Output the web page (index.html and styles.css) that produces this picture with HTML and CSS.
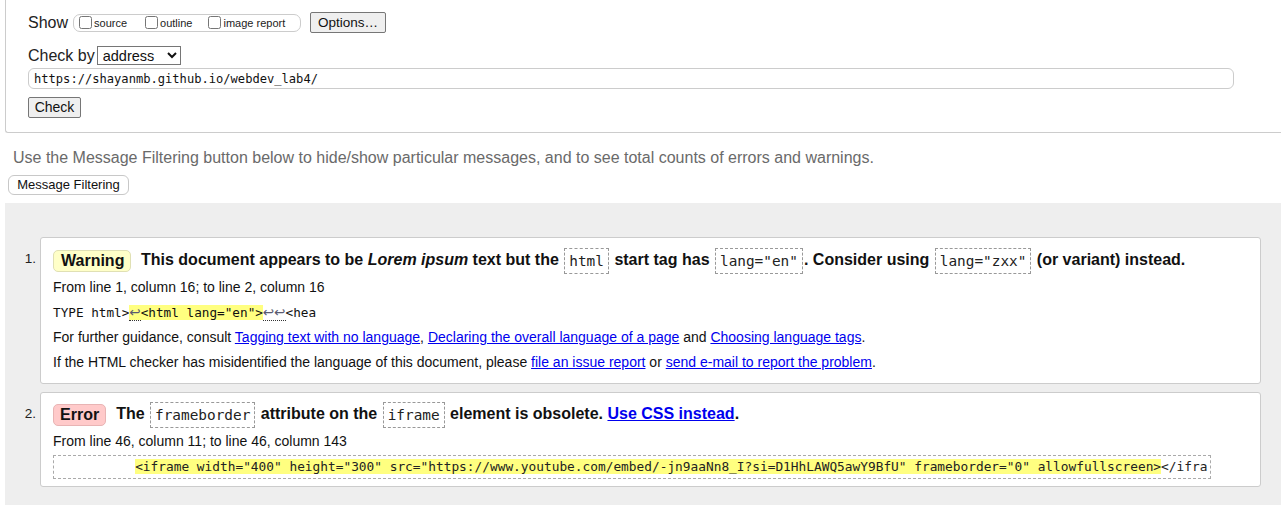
FILE: index.html
```html
<!DOCTYPE html>
<html lang="en">
<head>
<meta charset="utf-8">
<title>Nu Html Checker</title>
<link rel="stylesheet" href="styles.css">
</head>
<body>
<form class="top">
  <div class="row row-show">
    <span class="lbl">Show</span>
    <fieldset class="opts">
      <label class="opt opt-source"><input type="checkbox">source</label>
      <label class="opt opt-outline"><input type="checkbox">outline</label>
      <label class="opt"><input type="checkbox">image report</label>
    </fieldset>
    <button type="button" class="btn btn-options">Options…</button>
  </div>
  <div class="row row-by">
    <span class="lbl">Check by</span>
    <select class="sel"><option>address</option></select>
  </div>
  <input class="url" type="text" value="https://shayanmb.github.io/webdev_lab4/">
  <div class="row-check"><button type="button" class="btn btn-check">Check</button></div>
</form>
<p class="hint">Use the Message Filtering button below to hide/show particular messages, and to see total counts of errors and warnings.</p>
<button type="button" class="filter">Message Filtering</button>
<div class="results">
  <ol class="list">
    <li class="item">
      <span class="num">1.</span>
      <div class="card">
        <p class="title"><span class="badge badge-warn">Warning</span><span class="ttext">This document appears to be <em>Lorem ipsum</em> text but the <code class="c">html</code> start tag has <code class="c">lang="en"</code>. Consider using <code class="c">lang="zxx"</code> (or variant) instead.</span></p>
        <p class="line">From line 1, column 16; to line 2, column 16</p>
        <p class="line code-line"><code class="ex1">TYPE html&gt;<mark class="hl"><b class="lf">↩</b>&lt;html lang="en"&gt;</mark><b class="lf">↩↩</b>&lt;hea</code></p>
        <p class="line">For further guidance, consult <a href="#">Tagging text with no language</a>, <a href="#">Declaring the overall language of a page</a> and <a href="#">Choosing language tags</a>.</p>
        <p class="line">If the HTML checker has misidentified the language of this document, please <a href="#">file an issue report</a> or <a href="#">send e-mail to report the problem</a>.</p>
      </div>
    </li>
    <li class="item">
      <span class="num">2.</span>
      <div class="card card-err">
        <p class="title"><span class="badge badge-err">Error</span><span class="ttext">The <code class="c">frameborder</code> attribute on the <code class="c">iframe</code> element is obsolete. <a href="#">Use CSS instead</a>.</span></p>
        <p class="line">From line 46, column 11; to line 46, column 143</p>
        <p class="extract-line"><code class="extract">          <mark class="hl">&lt;iframe width="400" height="300" src="https://www.youtube.com/embed/-jn9aaNn8_I?si=D1HhLAWQ5awY9BfU" frameborder="0" allowfullscreen&gt;</mark>&lt;/ifra</code></p>
      </div>
    </li>
  </ol>
</div>
</body>
</html>
```
FILE: styles.css
```css
html, body {
  margin: 0;
  padding: 0;
  background: #fff;
  font-family: "Liberation Sans", Arial, sans-serif;
  color: #111;
  overflow: hidden;
}

.top {
  margin: 0 0 0 5px;
  border-left: 1px solid #ccc;
  border-bottom: 1px solid #ccc;
  border-bottom-left-radius: 3px;
  padding: 12px 0 14px 22px;
  height: 106px;
  display: flex;
  flex-direction: column;
  align-items: flex-start;
}

.row {
  display: flex;
  align-items: center;
}

.row-show { height: 21px; }

.lbl {
  font-size: 16px;
  color: #222;
}

.opts {
  margin: 0 0 0 5px;
  padding: 0 5px 0 0;
  height: 16px;
  width: 221px;
  border: 1px solid #ccc;
  border-radius: 7px;
  display: flex;
  align-items: center;
  box-sizing: content-box;
}

.opt {
  display: flex;
  align-items: center;
  font-size: 11px;
  color: #222;
}

.opt input {
  width: 13px;
  height: 13px;
  margin: 0 2px 0 5px;
}

.opt-source { margin-right: 13px; }
.opt-outline { margin-right: 11px; }

.btn {
  font-family: "Liberation Sans", Arial, sans-serif;
  font-size: 13.5px;
  color: #111;
  background: #efefef;
  border: 1px solid #767676;
  border-radius: 2px;
  padding: 0 7px;
  height: 21px;
  line-height: 19px;
}

.btn-options {
  margin-left: 9px;
  width: 76px;
}

.row-by {
  margin-top: 13px;
  height: 19px;
}

.sel {
  margin-left: 2px;
  width: 84px;
  height: 19px;
  font-family: "Liberation Sans", Arial, sans-serif;
  font-size: 14.5px;
  color: #111;
  border: 1px solid #767676;
  border-radius: 0;
  background: #fff;
  padding: 0 0 0 1px;
}

.url {
  margin-top: 3px;
  width: 1206px;
  height: 22px;
  box-sizing: border-box;
  border: 1px solid #ccc;
  border-radius: 6px;
  padding: 0 5px;
  font-family: "DejaVu Sans Mono", monospace;
  font-size: 12.1px;
  color: #111;
  outline: none;
}

.row-check { margin-top: 8px; }

.btn-check {
  width: 53px;
  padding: 0;
  font-size: 14px;
}

.hint {
  margin: 16px 0 0 13px;
  font-size: 16px;
  color: #6a6a6a;
  line-height: 18px;
  white-space: nowrap;
}

.filter {
  display: block;
  margin: 8px 0 0 8px;
  height: 20px;
  width: 121px;
  padding: 0;
  font-family: "Liberation Sans", Arial, sans-serif;
  font-size: 13px;
  color: #111;
  background: #fff;
  border: 1px solid #c8c8c8;
  border-radius: 6px;
  line-height: 18px;
}

.results {
  margin: 8px 0 0 5px;
  background: #eee;
  padding: 34px 20px 40px 0;
  height: 400px;
}

.list {
  list-style: none;
  margin: 0;
  padding: 0;
  display: flex;
  flex-direction: column;
  gap: 8px;
}

.item {
  display: flex;
  align-items: flex-start;
}

.num {
  width: 35px;
  box-sizing: border-box;
  padding: 13px 4px 0 0;
  text-align: right;
  font-size: 13.5px;
  color: #222;
  line-height: 18px;
}

.card {
  flex: 1;
  background: #fff;
  border: 1px solid #ccc;
  border-radius: 3px;
  padding: 9px 12px 8px 12px;
}

.card-err { padding-top: 8px; padding-bottom: 7px; }

.card p { margin: 0; }

.title {
  display: flex;
  align-items: center;
  height: 28px;
  font-size: 16px;
  font-weight: bold;
  color: #111;
  white-space: nowrap;
}

.badge {
  display: inline-block;
  height: 20px;
  line-height: 20px;
  padding: 0 7px;
  border-radius: 5px;
  margin-right: 10px;
  font-size: 16px;
}

.badge-warn {
  background: #ffffc8;
  border: 1px solid #e0e0b4;
  width: 62px;
  text-align: center;
}

.badge-err {
  background: #ffcaca;
  border: 1px solid #e8b4b4;
  padding: 0 6px;
}

.ttext em { font-style: italic; }

.c {
  display: inline-block;
  font-family: "DejaVu Sans Mono", monospace;
  font-weight: normal;
  font-size: 14.4px;
  line-height: 24px;
  height: 24px;
  padding: 0 4px;
  border: 1px dashed #999;
  color: #222;
  vertical-align: middle;
  margin: 0 1px;
}

a { color: #00e; text-decoration: underline; }

.line {
  font-size: 14px;
  line-height: 25px;
  color: #111;
  white-space: nowrap;
}

.code-line { height: 25px; }

.ex1 {
  font-family: "DejaVu Sans Mono", monospace;
  font-size: 12.7px;
  color: #111;
}

.hl {
  background: #ffff80;
  color: inherit;
}

.lf {
  font-family: "DejaVu Sans", sans-serif;
  font-weight: normal;
  font-size: 13.5px;
  border-bottom: 1px dotted #333;
  color: #5a5a70;
}

.extract-line {
  display: flex;
  padding-top: 1px;
}

.extract {
  display: block;
  white-space: pre;
  font-family: "DejaVu Sans Mono", monospace;
  font-size: 12.82px;
  line-height: 22px;
  padding: 0 3px 0 4px;
  border: 1px dashed #aaa;
  color: #222;
}
```
